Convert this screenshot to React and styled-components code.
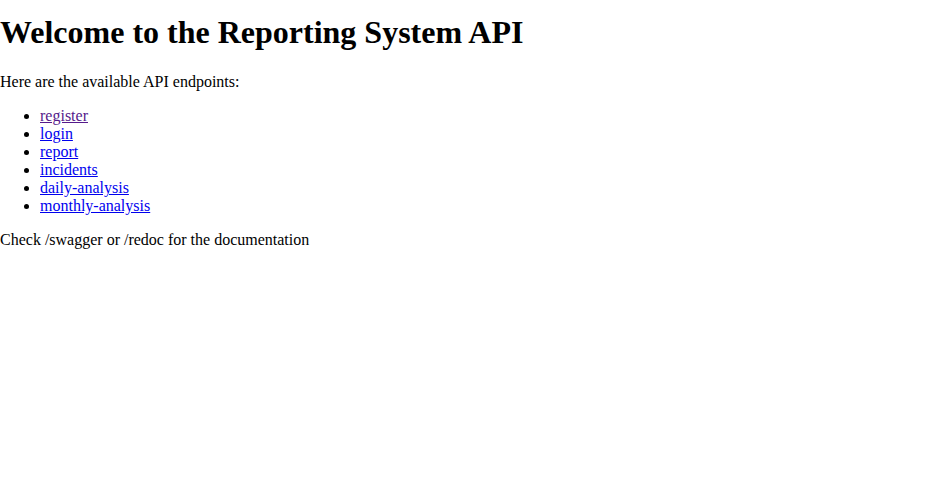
import styled, { createGlobalStyle } from "styled-components";

const GlobalStyle = createGlobalStyle`
  body {
    margin: 0;
    background: #fff;
    color: #000;
    font-family: "Liberation Serif", "Times New Roman", serif;
    font-size: 16px;
  }
`;

const endpoints = [
  { name: "register", visited: true },
  { name: "login" },
  { name: "report" },
  { name: "incidents" },
  { name: "daily-analysis" },
  { name: "monthly-analysis" },
];

const App = () => {
  return (
    <Page>
      <GlobalStyle />
      <Title>Welcome to the Reporting System API</Title>
      <Text>Here are the available API endpoints:</Text>
      <EndpointList>
        {endpoints.map((e) => (
          <li key={e.name}>
            <EndpointLink href={"#" + e.name} $visited={e.visited}>
              {e.name}
            </EndpointLink>
          </li>
        ))}
      </EndpointList>
      <Text>Check /swagger or /redoc for the documentation</Text>
    </Page>
  );
};

export default App;

const Page = styled.div`
  display: block;
`;

const Title = styled.h1`
  font-size: 32px;
  font-weight: 700;
  margin: 14.44px 0 21.44px;
`;

const Text = styled.p`
  margin: 16px 0;
`;

const EndpointList = styled.ul`
  margin: 16px 0;
  padding-left: 40px;
  list-style: disc;
`;

const EndpointLink = styled.a`
  color: ${(p) => (p.$visited ? "#551a8b" : "#0000ee")};
  text-decoration: underline;
`;
